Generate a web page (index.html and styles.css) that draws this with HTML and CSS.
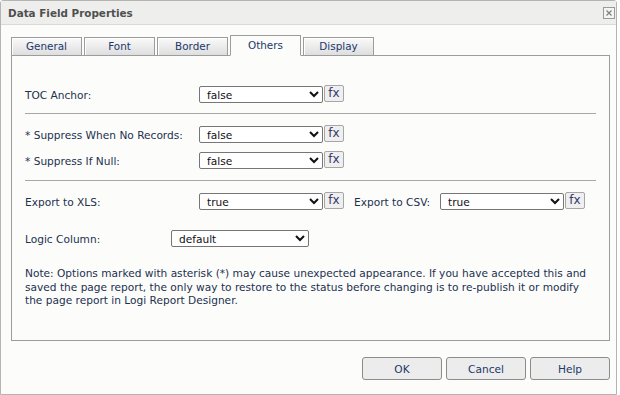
FILE: index.html
```html
<!DOCTYPE html>
<html lang="en">
<head>
    <meta charset="UTF-8">
    <title>Data Field Properties</title>
    <link rel="stylesheet" href="styles.css">
</head>
<body>
    <div class="dialog">
        <div class="titlebar">
            <span class="title">Data Field Properties</span>
            <span class="close-btn" title="Close">
                <svg width="12" height="12" viewBox="0 0 12 12">
                    <rect x="0.5" y="0.5" width="11" height="11" fill="#f4f4f2" stroke="#9a9a9a"/>
                    <path d="M3.5 3.5 L8.5 8.5 M8.5 3.5 L3.5 8.5" stroke="#808080" stroke-width="1.2"/>
                </svg>
            </span>
        </div>

        <div class="tabs">
            <div class="tab">General</div>
            <div class="tab">Font</div>
            <div class="tab">Border</div>
            <div class="tab active">Others</div>
            <div class="tab">Display</div>
        </div>

        <div class="panel">
            <div class="row first">
                <label class="label">TOC Anchor:</label>
                <select class="field"><option>false</option><option>true</option></select>
                <button class="fx-btn">fx</button>
            </div>

            <div class="separator"></div>

            <div class="row">
                <label class="label">* Suppress When No Records:</label>
                <select class="field"><option>false</option><option>true</option></select>
                <button class="fx-btn">fx</button>
            </div>
            <div class="row tight">
                <label class="label">* Suppress If Null:</label>
                <select class="field"><option>false</option><option>true</option></select>
                <button class="fx-btn">fx</button>
            </div>

            <div class="separator"></div>

            <div class="row">
                <label class="label">Export to XLS:</label>
                <select class="field"><option>true</option><option>false</option></select>
                <button class="fx-btn">fx</button>
                <label class="label-inline">Export to CSV:</label>
                <select class="field"><option>true</option><option>false</option></select>
                <button class="fx-btn">fx</button>
            </div>

            <div class="row logic">
                <label class="label short">Logic Column:</label>
                <select class="field wide"><option>default</option></select>
            </div>

            <p class="note">Note: Options marked with asterisk (*) may cause unexpected appearance. If you have accepted this and saved the page report, the only way to restore to the status before changing is to re-publish it or modify the page report in Logi Report Designer.</p>
        </div>

        <div class="actions">
            <button class="action-btn">OK</button>
            <button class="action-btn">Cancel</button>
            <button class="action-btn">Help</button>
        </div>
    </div>
</body>
</html>
```
FILE: styles.css
```css
:root {
    --text-color: #22304f;
    --tab-text: #22386a;
    --line-color: #9c9c9c;
    --dialog-bg: #fcfdfb;
}

body {
    margin: 0;
    background: #ffffff;
    font-family: 'DejaVu Sans', sans-serif;
    font-size: 10.6px;
    color: var(--text-color);
}

.dialog {
    box-sizing: border-box;
    width: 617px;
    height: 395px;
    background: var(--dialog-bg);
    border: 1px solid #b4b4b4;
    border-radius: 3px 3px 0 0;
}

.titlebar {
    display: flex;
    align-items: center;
    justify-content: space-between;
    height: 23px;
    padding: 0 1px 0 7px;
    background: #eeeeec;
    border-bottom: 1px solid #d9d9d7;
}

.title {
    font-weight: bold;
    font-size: 10.4px;
    color: #505050;
}

.close-btn {
    display: flex;
    margin-top: 1px;
}

/* tabs */
.tabs {
    display: flex;
    align-items: flex-end;
    gap: 2px;
    margin: 10px 0 -1px 10px;
    position: relative;
    z-index: 1;
}

.tab {
    box-sizing: border-box;
    width: 71px;
    height: 19px;
    border: 1px solid var(--line-color);
    background: linear-gradient(#fafafa, #dedede);
    box-shadow: inset 1px 1px 0 #ffffff;
    color: var(--tab-text);
    font-size: 10.4px;
    text-align: center;
    line-height: 17px;
}

.tab.active {
    height: 21px;
    background: var(--dialog-bg);
    border-bottom-color: var(--dialog-bg);
    box-shadow: none;
    line-height: 19px;
}

/* panel */
.panel {
    box-sizing: border-box;
    height: 286px;
    margin: 0 6px 0 10px;
    padding: 30px 13px 0;
    border: 1px solid var(--line-color);
}

.row {
    display: flex;
    align-items: flex-start;
    height: 17px;
    margin-top: 12px;
}

.row.first {
    margin-top: 0;
}

.row.tight {
    margin-top: 9px;
}

.row.logic {
    margin-top: 20px;
}

.label {
    width: 174px;
    line-height: 18px;
}

.label.short {
    width: 146px;
}

.label-inline {
    width: 86px;
    margin-left: 10px;
    line-height: 18px;
}

.field {
    box-sizing: border-box;
    width: 124px;
    height: 17px;
    padding: 0 0 0 3px;
    font-family: inherit;
    font-size: 10.6px;
    color: #111111;
    background: #ffffff;
    border: 1px solid #767676;
    border-radius: 2px;
}

.field.wide {
    width: 138px;
}

.fx-btn {
    box-sizing: border-box;
    width: 20px;
    height: 17px;
    margin: -1px 0 0 1px;
    padding: 0 0 1px;
    font-family: inherit;
    font-size: 12px;
    line-height: 14px;
    color: #36396a;
    background: #efefef;
    border: 1px solid #a6a6a6;
    border-radius: 2px;
}

.separator {
    height: 1px;
    margin: 10px 0 0;
    background: #a8a8a8;
}

.separator + .row {
    margin-top: 12px;
}

.row + .separator {
    margin-top: 11px;
}

.row.first + .separator {
    margin-top: 10px;
}

.note {
    margin: 20px 0 0;
    line-height: 13.5px;
}

/* bottom buttons */
.actions {
    display: flex;
    justify-content: flex-end;
    gap: 4px;
    margin: 16px 6px 0 0;
}

.action-btn {
    box-sizing: border-box;
    width: 80px;
    height: 23px;
    padding: 0;
    font-family: inherit;
    font-size: 10.6px;
    color: var(--tab-text);
    background: #ececec;
    border: 1px solid #8c8c8c;
    border-radius: 3px;
}
```
